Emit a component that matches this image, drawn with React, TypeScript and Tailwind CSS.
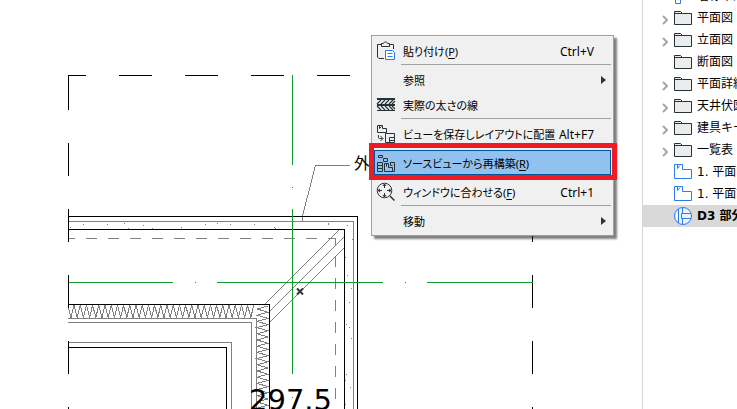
import type { ReactNode } from 'react';

const ink = '#263238';
const blue = '#2b7cf0';

/* ---------- menu icons ---------- */

function PasteIcon() {
  return (
    <svg width="20" height="20" viewBox="0 0 20 20" fill="none" stroke={ink}>
      <path d="M8 17.500H3L1.500 16V3.500H5M14 3.500h3.500V8" />
      <path d="M5.500 5.500v-3h2c0-1 1-1.500 2-1.500s2 .5 2 1.500h2v3z" />
      <path d="M9.500 9.500h7l2 2v7h-9z" stroke={blue} fill="#fff" />
      <path d="M11.500 12.500h5M11.500 15.500h5" stroke={blue} />
    </svg>
  );
}

function LineWeightIcon() {
  return (
    <svg width="20" height="20" viewBox="0 0 20 20" fill="none" stroke={ink}>
      <path d="M1 4h18M1 10h18" strokeWidth="2" />
      <path d="M1 15.500h18" />
      <path d="M1 9l4-4M5 9l4-4M9 9l4-4M13 9l4-4M16 9l3-3" strokeWidth="1.200" />
      <path d="M1 11l4 4M5 11l4 4M9 11l4 4M13 11l4 4M16 11l3 3" strokeWidth="1.200" />
    </svg>
  );
}

function SaveViewIcon() {
  return (
    <svg width="20" height="20" viewBox="0 0 20 20" fill="none" stroke={ink}>
      <path d="M1.500 8.500v-7h5v3h4v4z" />
      <path d="M3.500 1.500v3l2-2" />
      <path d="M2.500 11v2.500q0 1 1 1h3M4.500 12l2.500 2.500L4.500 17" />
      <path d="M9.500 18.500v-9h9v9zM13.500 18v-4.500h5M14 16.500h4" />
    </svg>
  );
}

function RebuildIcon() {
  return (
    <svg width="20" height="20" viewBox="0 0 20 20" fill="none" stroke={ink}>
      <path d="M2.500 2.500h4v2h-4zM7.500 5.500h4v3h-4z" />
      <path d="M1.500 9.500h5v3h-5zM3.500 12.500h3v3h-3M1.500 15.500h5v3h-5zM1.500 12.500v3" />
      <path d="M8.500 18.500v-8h4v4h4v4zM10.500 10.500v3" />
      <path d="M14 9.500h4.500v9h-2M14.500 9.500v3h2" />
    </svg>
  );
}

function FitWindowIcon() {
  return (
    <svg width="20" height="20" viewBox="0 0 20 20" fill="none" stroke={ink}>
      <circle cx="8.500" cy="8.500" r="7.300" />
      <path d="M14 14l4.500 4.500" strokeWidth="1.500" />
      <path d="M8.500 2v4M8.500 11v4M2 8.500h4M11 8.500h4" />
      <path d="M7 4l1.500-2L10 4M7 13l1.500 2L10 13M4 7L2 8.500 4 10M13 7l2 1.500L13 10" />
    </svg>
  );
}

/* ---------- tree icons ---------- */

function FolderIcon() {
  return (
    <svg width="20" height="18" viewBox="0 0 20 18" fill="#ececec" stroke={ink}>
      <path d="M1.500 15.500V2.500h6l2 2h9v11z" />
      <path d="M1.500 4.500h8" />
    </svg>
  );
}

function LayoutIcon() {
  return (
    <svg width="20" height="18" viewBox="0 0 20 18" fill="none" stroke={blue}>
      <path d="M1.500 15.500V1.500h8v5h9v9z" />
      <path d="M4.500 1.500v4l2.500-3" />
    </svg>
  );
}

function DetailIcon() {
  return (
    <svg width="20" height="20" viewBox="0 0 20 20" fill="none" stroke={blue}>
      <circle cx="10" cy="10" r="8.500" fill="#eef4fc" />
      <path d="M5.500 3v14M9.500 2v5.500M9.500 12.500V18M18 7.500H8.500v5H18" />
    </svg>
  );
}

function RootIcon() {
  return (
    <svg width="20" height="18" viewBox="0 0 20 18" fill="none" stroke={blue}>
      <path d="M2.500 16.500v-14h5v14z" />
    </svg>
  );
}

/* ---------- context menu ---------- */

type ItemProps = {
  label: string;
  accessKey?: string;
  shortcut?: string;
  icon?: ReactNode;
  submenu?: boolean;
  active?: boolean;
};

function MenuItem({ label, accessKey, shortcut, icon, submenu, active }: ItemProps) {
  return (
    <button
      type="button"
      role="menuitem"
      className={
        active
          ? 'relative flex h-[25px] w-full items-center border border-[#00559b] bg-[#91c1ee] pt-px pr-4 text-left'
          : 'relative flex h-[25px] w-full items-center border border-transparent pt-px pr-4 text-left'
      }
    >
      <span className="flex w-7 shrink-0 items-center pl-px">{icon}</span>
      <span className="flex-1 pt-0.5 text-[11px] whitespace-nowrap">
        {label}
        {accessKey && (
          <>
            (<u className="underline-offset-2">{accessKey}</u>)
          </>
        )}
      </span>
      {shortcut && <span className="pt-0.5">{shortcut}</span>}
      {submenu && (
        <svg className="absolute right-1" width="5" height="8" fill="#333">
          <path d="M0 0l5 4-5 4z" />
        </svg>
      )}
      {active && <span className="absolute -top-2 -right-[7px] -bottom-1.5 -left-1.5 border-[5px] border-[#ed1c24]" />}
    </button>
  );
}

function Separator() {
  return (
    <div role="separator" className="h-1 pt-px pl-[27px]">
      <div className="h-px bg-[#a0a0a0]" />
    </div>
  );
}

function ContextMenu() {
  return (
    <div
      role="menu"
      className="absolute top-[35px] left-[371px] w-[243px] border border-[#a0a0a0] bg-[#f0f0f0] p-0.5 text-xs text-black shadow-[3px_3px_2px_rgba(0,0,0,0.5)] [font-feature-settings:'palt']"
    >
      <MenuItem label="貼り付け" accessKey="P" shortcut="Ctrl+V" icon={<PasteIcon />} />
      <Separator />
      <MenuItem label="参照" submenu />
      <MenuItem label="実際の太さの線" icon={<LineWeightIcon />} />
      <Separator />
      <MenuItem label="ビューを保存しレイアウトに配置" shortcut="Alt+F7" icon={<SaveViewIcon />} />
      <Separator />
      <MenuItem label="ソースビューから再構築" accessKey="R" icon={<RebuildIcon />} active />
      <Separator />
      <MenuItem label="ウィンドウに合わせる" accessKey="F" shortcut="Ctrl+1" icon={<FitWindowIcon />} />
      <Separator />
      <MenuItem label="移動" submenu />
    </div>
  );
}

/* ---------- drawing ---------- */

const speckles = [
  [70, 227], [75, 221], [83, 224], [107, 224], [124, 223], [128, 228], [143, 225], [152, 228],
  [181, 227], [205, 224], [217, 223], [230, 224], [254, 224], [274, 227], [275, 228], [328, 223],
  [328, 224], [347, 225], [352, 239], [345, 257], [347, 275], [351, 288], [349, 302], [346, 324],
  [349, 327], [351, 338], [346, 374], [345, 380], [350, 387], [345, 404],
];

const insulationTop =
  'M68.500 308 ' +
  Array.from({ length: 30 }, (_, i) => `L${71 + i * 6.2} 317.500 L${74 + i * 6.2} 305`).join(' ');

const insulationSide =
  'M257 309 ' +
  Array.from({ length: 30 }, (_, i) => `L268 ${306 + i * 6.2} L257 ${309 + i * 6.2}`).join(' ');

function Drawing() {
  return (
    <svg className="absolute inset-0 h-full w-full" fill="none" shapeRendering="crispEdges">
      <g stroke="#808080">
        <path d="M68 221.500h285.500V2000" />
        <path d="M68 238.500h267.500" strokeDasharray="11 11" strokeDashoffset="4" />
        <path d="M335.500 238v8M335.500 256V2000" strokeDasharray="11 11" />
        <path d="M68 318.500h188.500V2000" />
        <path d="M68 322.500h183.500V2000" />
        <path d="M68 342.500h163.500V2000" />
        <path d={insulationTop} />
        <path d={insulationSide} />
        <path d="M339 230l-74 74M344 237l-74 74M344 248l-74 74" />
        <path d="M302.500 221v-5l13-50.500H350" />
      </g>
      <g fill="#808080">
        {speckles.map(([x, y]) => (
          <rect key={`${x}-${y}`} x={x} y={y} width="1" height="1" />
        ))}
      </g>
      <g stroke="#000">
        <path d="M68 216.500h289.500V2000" />
        <path d="M68 229.500h276.500V2000" />
        <path d="M68 304.500h201.500V2000" />
        <path d="M68 347.500h158.500V2000" />
        <path d="M68 75.500h464" strokeDasharray="33 33" strokeDashoffset="15" />
        <path d="M68.500 77V2000" strokeDasharray="33 33" />
        <path d="M68.500 75v5" />
        <path d="M532.500 77V2000" strokeDasharray="33 33" />
      </g>
      <g stroke="#119a2b">
        <path d="M292.500 75v90M292.500 187v1M292.500 209v165M292.500 397v1" />
        <path d="M69 282.500h104M195 282.500h1M217 282.500h166M405 282.500h1M427 282.500h106" />
      </g>
      <path d="M297 288.500l6 6M303 288.500l-6 6" stroke="#333" strokeWidth="2" shapeRendering="auto" />
      <text x="354" y="169" fontSize="16" fill="#000" className="font-['Noto_Sans_CJK_JP',sans-serif]">
        外
      </text>
      <text x="249" y="410" fontSize="29" fill="#000" className="font-['DejaVu_Sans',sans-serif]">
        297.5
      </text>
    </svg>
  );
}

/* ---------- view map ---------- */

type TreeRowProps = { label: string; icon: ReactNode; expandable?: boolean; selected?: boolean };

function TreeRow({ label, icon, expandable, selected }: TreeRowProps) {
  return (
    <button
      type="button"
      role="treeitem"
      aria-selected={!!selected}
      className={
        selected
          ? 'flex h-[22px] w-full shrink-0 items-center bg-[#d9d9d9] text-left font-bold whitespace-nowrap'
          : 'flex h-[22px] w-full shrink-0 items-center text-left whitespace-nowrap'
      }
    >
      <span className="w-[30px] shrink-0 pt-1 pl-[19px]">
        {expandable && (
          <svg width="6" height="10" fill="none" stroke="#a6a6a6" strokeWidth="2">
            <path d="M1 1l4 4-4 4" />
          </svg>
        )}
      </span>
      <span className="w-6 shrink-0">{icon}</span>
      <span>{label}</span>
    </button>
  );
}

function ViewMap() {
  return (
    <aside className="w-[95px] shrink-0 overflow-hidden border-l border-[#d4d4d4] bg-white font-['DejaVu_Sans','Noto_Sans_CJK_JP',sans-serif] text-xs text-black">
      <div role="tree" className="-mt-[15px] flex flex-col">
        <TreeRow label="名称未設定" icon={<RootIcon />} />
        <TreeRow label="平面図" icon={<FolderIcon />} expandable />
        <TreeRow label="立面図" icon={<FolderIcon />} expandable />
        <TreeRow label="断面図" icon={<FolderIcon />} />
        <TreeRow label="平面詳細図" icon={<FolderIcon />} expandable />
        <TreeRow label="天井伏図" icon={<FolderIcon />} expandable />
        <TreeRow label="建具キープラン" icon={<FolderIcon />} expandable />
        <TreeRow label="一覧表" icon={<FolderIcon />} expandable />
        <TreeRow label="1. 平面図" icon={<LayoutIcon />} />
        <TreeRow label="1. 平面詳細図" icon={<LayoutIcon />} />
        <TreeRow label="D3 部分詳細図" icon={<DetailIcon />} selected />
      </div>
    </aside>
  );
}

export default function App() {
  return (
    <div
      lang="ja"
      className="flex h-screen overflow-hidden bg-white font-['Noto_Sans','Noto_Sans_CJK_JP',sans-serif]"
    >
      <main className="relative min-w-0 flex-1">
        <Drawing />
        <ContextMenu />
      </main>
      <ViewMap />
    </div>
  );
}
